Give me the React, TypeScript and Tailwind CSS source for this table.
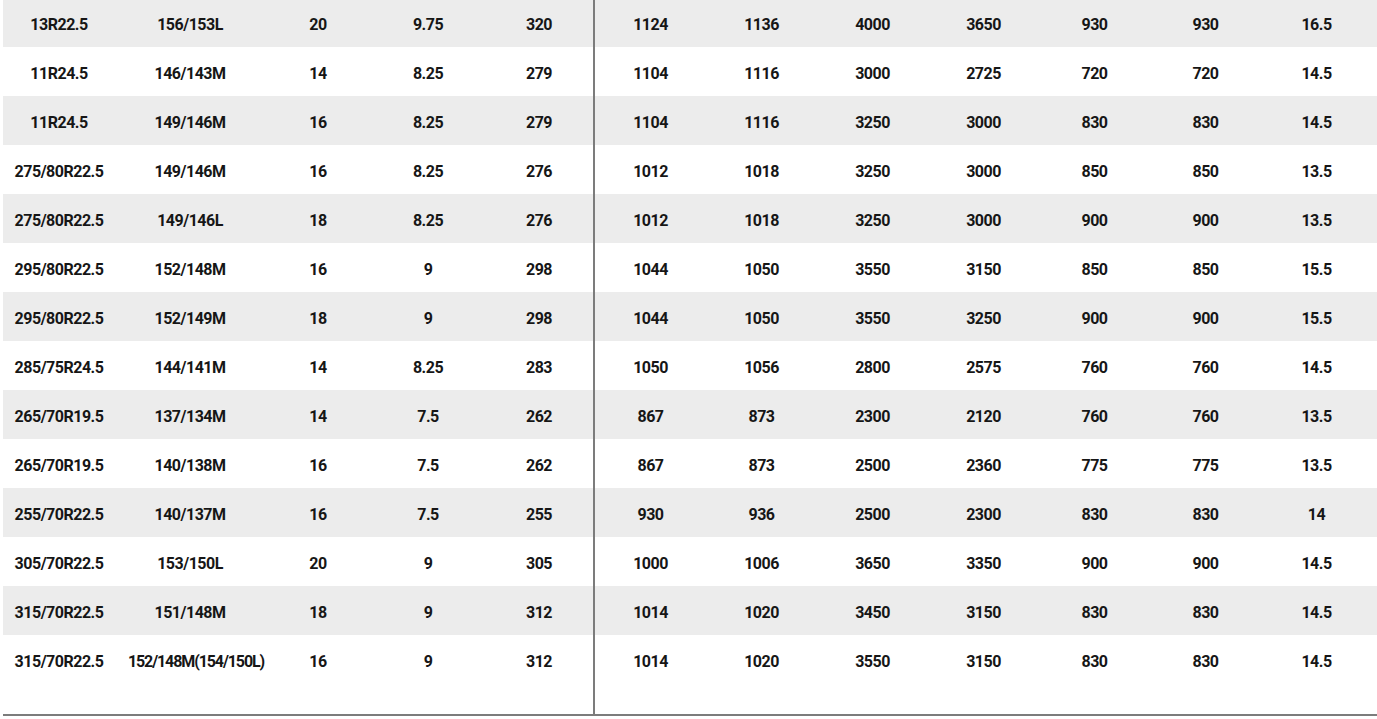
const rows: string[][] = [
  ['13R22.5', '156/153L', '20', '9.75', '320', '1124', '1136', '4000', '3650', '930', '930', '16.5'],
  ['11R24.5', '146/143M', '14', '8.25', '279', '1104', '1116', '3000', '2725', '720', '720', '14.5'],
  ['11R24.5', '149/146M', '16', '8.25', '279', '1104', '1116', '3250', '3000', '830', '830', '14.5'],
  ['275/80R22.5', '149/146M', '16', '8.25', '276', '1012', '1018', '3250', '3000', '850', '850', '13.5'],
  ['275/80R22.5', '149/146L', '18', '8.25', '276', '1012', '1018', '3250', '3000', '900', '900', '13.5'],
  ['295/80R22.5', '152/148M', '16', '9', '298', '1044', '1050', '3550', '3150', '850', '850', '15.5'],
  ['295/80R22.5', '152/149M', '18', '9', '298', '1044', '1050', '3550', '3250', '900', '900', '15.5'],
  ['285/75R24.5', '144/141M', '14', '8.25', '283', '1050', '1056', '2800', '2575', '760', '760', '14.5'],
  ['265/70R19.5', '137/134M', '14', '7.5', '262', '867', '873', '2300', '2120', '760', '760', '13.5'],
  ['265/70R19.5', '140/138M', '16', '7.5', '262', '867', '873', '2500', '2360', '775', '775', '13.5'],
  ['255/70R22.5', '140/137M', '16', '7.5', '255', '930', '936', '2500', '2300', '830', '830', '14'],
  ['305/70R22.5', '153/150L', '20', '9', '305', '1000', '1006', '3650', '3350', '900', '900', '14.5'],
  ['315/70R22.5', '151/148M', '18', '9', '312', '1014', '1020', '3450', '3150', '830', '830', '14.5'],
  ['315/70R22.5', '152/148M(154/150L)', '16', '9', '312', '1014', '1020', '3550', '3150', '830', '830', '14.5'],
];

// larguras das colunas da esquerda (antes da linha divisória)
const leftWidths = ['w-[112px]', 'w-[150px]', 'w-[106px]', 'w-[114px]', 'w-[108px]'];

export default function App() {
  return (
    <div
      className="bg-white text-[#161616] min-h-[719px] overflow-hidden"
      style={{ fontFamily: 'Roboto, "Liberation Sans", sans-serif' }}
    >
      <div className="ml-[3px] -mt-[2px] flex h-[718px] border-b-2 border-[#7c7c7c]">
        {/* bloco esquerdo */}
        <div className="w-[592px] border-r-2 border-[#7c7c7c] flex flex-col">
          {rows.map((row, i) => (
            <div
              key={i}
              className={`flex h-[49px] items-center ${i % 2 === 0 ? 'bg-[#ececec]' : ''}`}
            >
              {row.slice(0, 5).map((cell, j) => (
                <div
                  key={j}
                  className={`${leftWidths[j]} shrink-0 text-center text-[16px] font-bold whitespace-nowrap pt-[5px] ${
                    j === 1 && cell.length > 10 ? 'pl-[12px] tracking-[-1.1px]' : 'tracking-[-0.5px]'
                  }`}
                >
                  {cell}
                </div>
              ))}
            </div>
          ))}
        </div>
        {/* bloco direito */}
        <div className="flex-1 flex flex-col">
          {rows.map((row, i) => (
            <div
              key={i}
              className={`flex h-[49px] items-center ${i % 2 === 0 ? 'bg-[#ececec]' : ''}`}
            >
              {row.slice(5).map((cell, j) => (
                <div
                  key={j}
                  className="w-[111px] shrink-0 text-center text-[16px] font-bold tracking-[-0.5px] pt-[5px]"
                >
                  {cell}
                </div>
              ))}
            </div>
          ))}
        </div>
      </div>
    </div>
  );
}
